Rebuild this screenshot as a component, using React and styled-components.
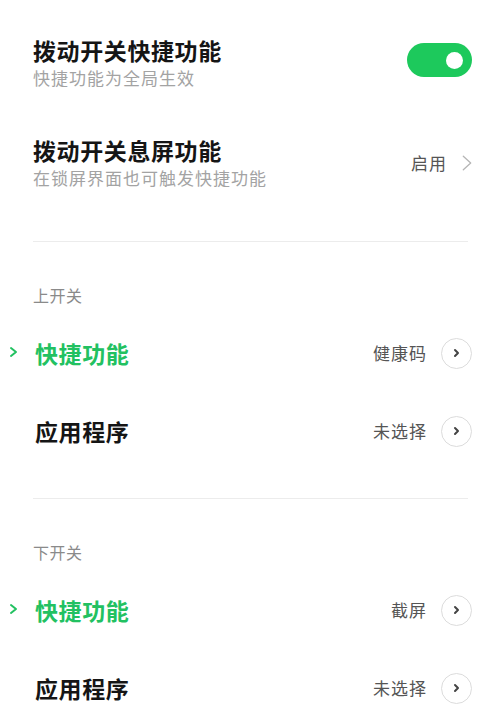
import React from "react";
import styled, { createGlobalStyle } from "styled-components";

const Global = createGlobalStyle`
  html, body { margin: 0; padding: 0; background: #ffffff; }
  body { font-family: "Noto Sans CJK SC", "Noto Sans", sans-serif; }
`;

const Page = styled.div`
  width: 500px;
  height: 720px;
  overflow: hidden;
  background: #fff;
  padding-top: 13px;
  box-sizing: border-box;
`;

const SettingRow = styled.div`
  height: 100px;
  display: flex;
  align-items: center;
  justify-content: space-between;
  padding: 0 28px 0 33px;
`;

const TextBlock = styled.div`
  display: flex;
  flex-direction: column;
  gap: 2px;
`;

const Title = styled.div`
  font-size: 23px;
  line-height: 28px;
  font-weight: 700;
  color: #151515;
  letter-spacing: 0.6px;
`;

const Subtitle = styled.div`
  font-size: 17px;
  line-height: 24px;
  color: #a3a3a3;
  letter-spacing: 1px;
`;

const Toggle = styled.div`
  width: 65px;
  height: 34px;
  border-radius: 17px;
  background: #1dc95c;
  display: flex;
  align-items: center;
  justify-content: flex-end;
  padding-right: 9px;
  box-sizing: border-box;
  margin-bottom: 6px;
`;

const Knob = styled.div`
  width: 17px;
  height: 17px;
  border-radius: 50%;
  background: #fff;
`;

const Trail = styled.div`
  display: flex;
  align-items: center;
  gap: ${(p) => p.$gap || 14}px;
`;

const Value = styled.span`
  font-size: 17px;
  line-height: 24px;
  color: #555;
  letter-spacing: 1px;
`;

const Divider = styled.div`
  height: 1px;
  background: #ececec;
  margin: 28px 32px 0 33px;
`;

const SectionLabel = styled.div`
  margin-top: 41px;
  padding-left: 33px;
  font-size: 16px;
  line-height: 24px;
  color: #8a8a8a;
  letter-spacing: 0.5px;
`;

const List = styled.div`
  margin-top: 7px;
`;

const PickRow = styled.div`
  height: 78px;
  display: flex;
  align-items: center;
  padding-right: 28px;
`;

const Marker = styled.div`
  width: 35px;
  flex: none;
  display: flex;
  align-items: center;
  padding-left: 9px;
  padding-bottom: 2px;
  box-sizing: border-box;
`;

const PickTitle = styled.div`
  flex: 1;
  font-size: 23px;
  line-height: 28px;
  font-weight: 700;
  color: ${(p) => (p.$active ? "#22c161" : "#151515")};
  letter-spacing: 0.6px;
`;

const CircleBtn = styled.div`
  width: 31px;
  height: 31px;
  border-radius: 50%;
  border: 1px solid #dcdcdc;
  box-sizing: border-box;
  display: flex;
  align-items: center;
  justify-content: center;
`;

const Chevron = ({ color = "#bbb", w = 10, h = 16, sw = 1.4 }) => (
  <svg width={w} height={h} viewBox={`0 0 ${w} ${h}`} fill="none">
    <path
      d={`M${sw} ${sw} L${w - sw} ${h / 2} L${sw} ${h - sw}`}
      stroke={color}
      strokeWidth={sw}
      strokeLinecap="round"
      strokeLinejoin="round"
    />
  </svg>
);

const Pick = ({ title, value, active }) => (
  <PickRow>
    <Marker>{active && <Chevron color="#22c161" w={9} h={12} sw={2} />}</Marker>
    <PickTitle $active={active}>{title}</PickTitle>
    <Trail>
      <Value>{value}</Value>
      <CircleBtn>
        <Chevron color="#444" w={7} h={10} sw={2} />
      </CircleBtn>
    </Trail>
  </PickRow>
);

export default function App() {
  return (
    <Page>
      <Global />
      <SettingRow>
        <TextBlock>
          <Title>拨动开关快捷功能</Title>
          <Subtitle>快捷功能为全局生效</Subtitle>
        </TextBlock>
        <Toggle>
          <Knob />
        </Toggle>
      </SettingRow>
      <SettingRow>
        <TextBlock>
          <Title>拨动开关息屏功能</Title>
          <Subtitle>在锁屏界面也可触发快捷功能</Subtitle>
        </TextBlock>
        <Trail $gap={15}>
          <Value>启用</Value>
          <Chevron color="#b5b5b5" w={10} h={16} sw={1.3} />
        </Trail>
      </SettingRow>
      <Divider />
      <SectionLabel>上开关</SectionLabel>
      <List>
        <Pick title="快捷功能" value="健康码" active />
        <Pick title="应用程序" value="未选择" />
      </List>
      <Divider />
      <SectionLabel>下开关</SectionLabel>
      <List>
        <Pick title="快捷功能" value="截屏" active />
        <Pick title="应用程序" value="未选择" />
      </List>
    </Page>
  );
}
